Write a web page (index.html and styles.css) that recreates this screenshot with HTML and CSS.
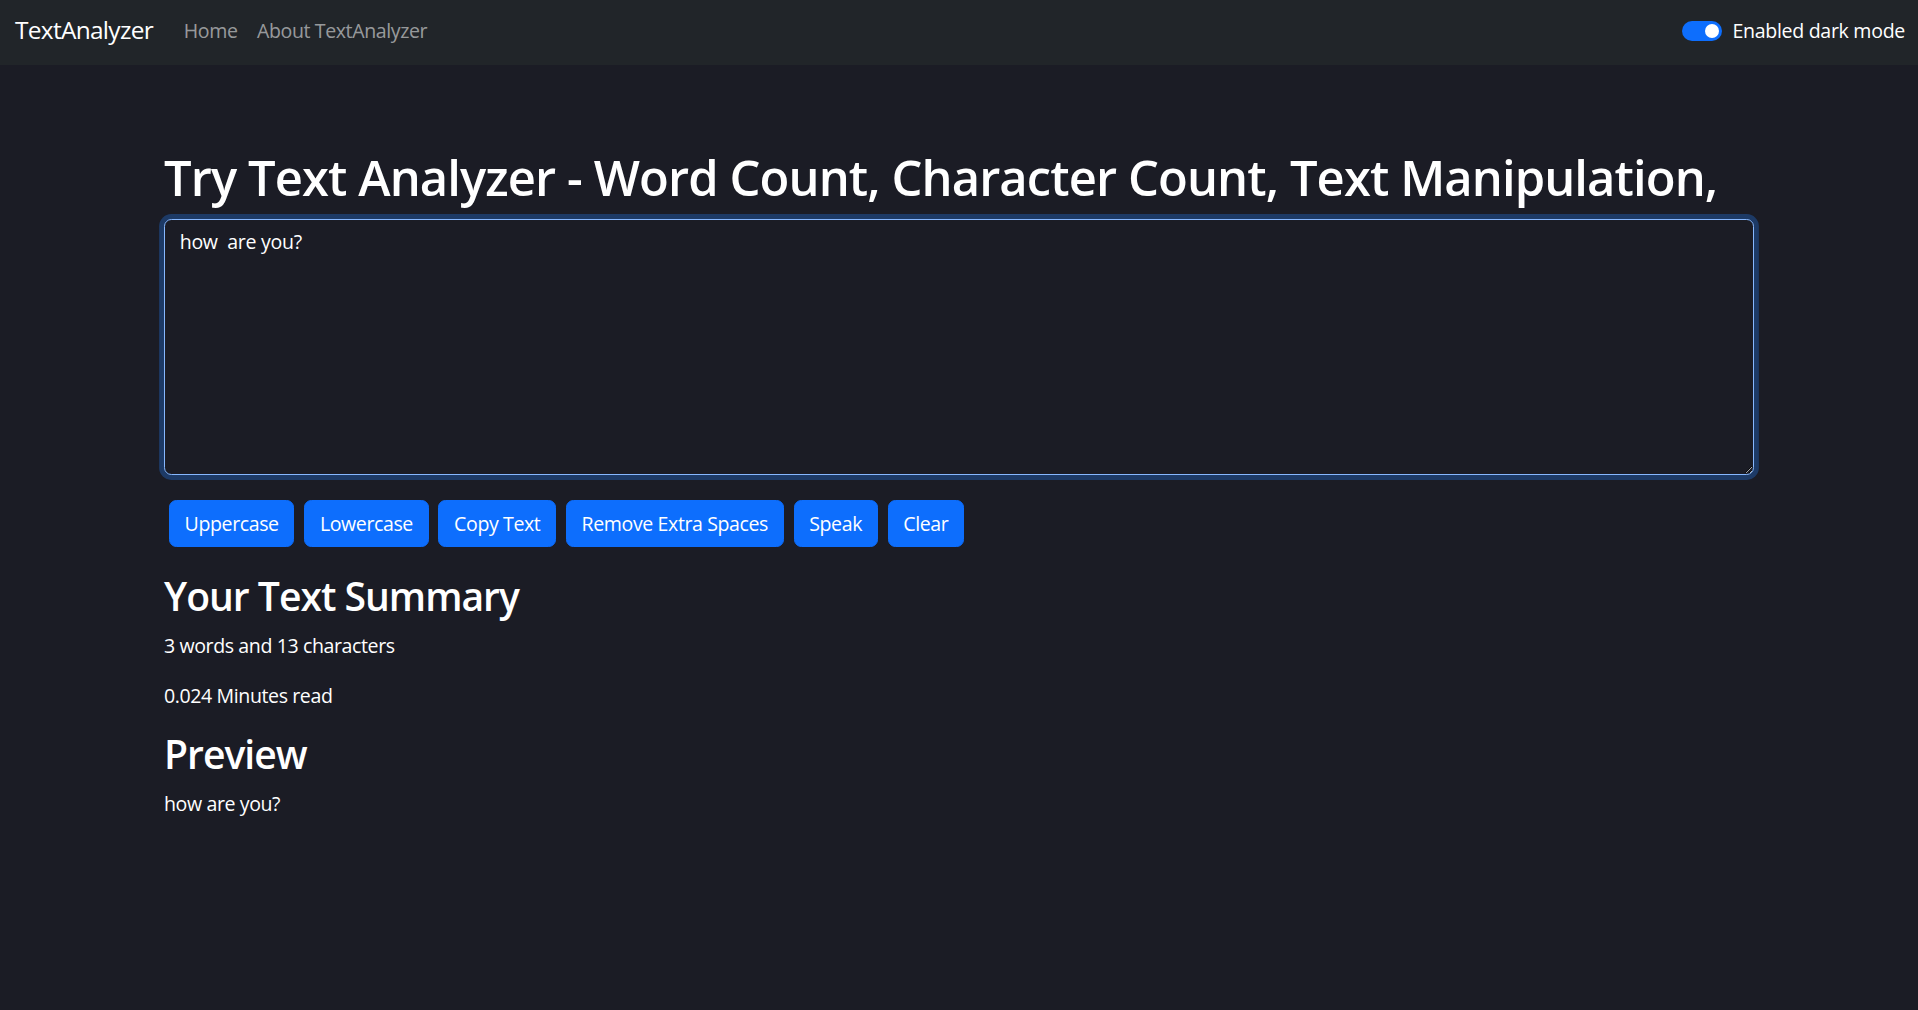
FILE: index.html
```html
<!DOCTYPE html>
<html lang="en">
<head>
<meta charset="utf-8">
<title>TextAnalyzer</title>
<link rel="stylesheet" href="styles.css">
</head>
<body>
<nav class="navbar">
  <div class="nav-left">
    <a class="brand" href="#">TextAnalyzer</a>
    <ul class="nav-links">
      <li><a href="#">Home</a></li>
      <li><a href="#">About TextAnalyzer</a></li>
    </ul>
  </div>
  <label class="switch">
    <span class="switch-track"><span class="switch-knob"></span></span>
    <span class="switch-label">Enabled dark mode</span>
  </label>
</nav>
<main class="container">
  <h1 class="title">Try Text Analyzer - Word Count, Character Count, Text Manipulation,</h1>
  <textarea class="text-input" rows="8">how  are you?</textarea>
  <div class="actions">
    <button class="btn">Uppercase</button>
    <button class="btn">Lowercase</button>
    <button class="btn">Copy Text</button>
    <button class="btn">Remove Extra Spaces</button>
    <button class="btn">Speak</button>
    <button class="btn">Clear</button>
  </div>
  <section class="summary">
    <h2 class="section-title">Your Text Summary</h2>
    <p class="line">3 words and 13 characters</p>
    <p class="line">0.024 Minutes read</p>
    <h2 class="section-title">Preview</h2>
    <p class="line">how are you?</p>
  </section>
</main>
</body>
</html>
```

FILE: styles.css
```css
html {
  font-size: 19.57px;
}
* {
  box-sizing: border-box;
}
body {
  margin: 0;
  background: #1b1c25;
  color: #fff;
  font-family: "Open Sans", "Noto Sans", sans-serif;
  font-size: 1rem;
  line-height: 1.5;
  min-height: 1010px;
}
.navbar {
  height: 65px;
  background: #212529;
  display: flex;
  align-items: center;
  justify-content: space-between;
  padding: 0 13px 4px 15px;
}
.nav-left {
  display: flex;
  align-items: center;
}
.brand {
  color: #fff;
  text-decoration: none;
  font-size: 1.25rem;
  letter-spacing: -0.7px;
  margin-right: 21px;
}
.nav-links {
  list-style: none;
  margin: 0;
  padding: 0;
  display: flex;
}
.nav-links a {
  display: block;
  color: rgba(255, 255, 255, 0.55);
  text-decoration: none;
  padding: 0 9.8px;
  letter-spacing: -0.4px;
}
.switch {
  display: flex;
  align-items: center;
  gap: 10px;
}
.switch-track {
  width: 40px;
  height: 20px;
  border-radius: 10px;
  background: #0d6efd;
  display: flex;
  align-items: center;
  justify-content: flex-end;
  padding-right: 3px;
}
.switch-knob {
  width: 14px;
  height: 14px;
  border-radius: 50%;
  background: #fff;
}
.switch-label {
  color: #fff;
  letter-spacing: -0.3px;
}
.container {
  max-width: 1620px;
  margin: 0 auto;
  padding: 83px 15px 0;
}
.title {
  font-size: 48.9px;
  font-weight: 600;
  line-height: 1.2;
  margin: 0 0 12px;
  letter-spacing: -0.9px;
}
.text-input {
  display: block;
  width: 100%;
  height: 256px;
  background: #1b1c25;
  color: #fff;
  font-family: inherit;
  font-size: 1rem;
  line-height: 1.5;
  padding: 7.3px 14.7px;
  border: 1.2px solid #86b7fe;
  border-radius: 7.3px;
  box-shadow: 0 0 0 4.9px #1d3a66;
  outline: none;
  resize: vertical;
  letter-spacing: -0.3px;
}
.actions {
  display: flex;
  margin-top: 25px;
}
.btn {
  margin: 0 4.9px;
  background: #0d6efd;
  color: #fff;
  border: 1.2px solid #0d6efd;
  border-radius: 7.3px;
  font-family: inherit;
  font-size: 1rem;
  line-height: 1.5;
  padding: 7.3px 14.7px;
  height: 47px;
  letter-spacing: -0.4px;
}
.summary {
  margin-top: 26px;
}
.section-title {
  font-size: 39.1px;
  font-weight: 600;
  line-height: 1.2;
  margin: 0 0 11px;
  letter-spacing: -1px;
}
.line {
  margin: 0 0 21px;
  letter-spacing: -0.4px;
}
.line + .section-title {
  margin-top: 4px;
}
```
